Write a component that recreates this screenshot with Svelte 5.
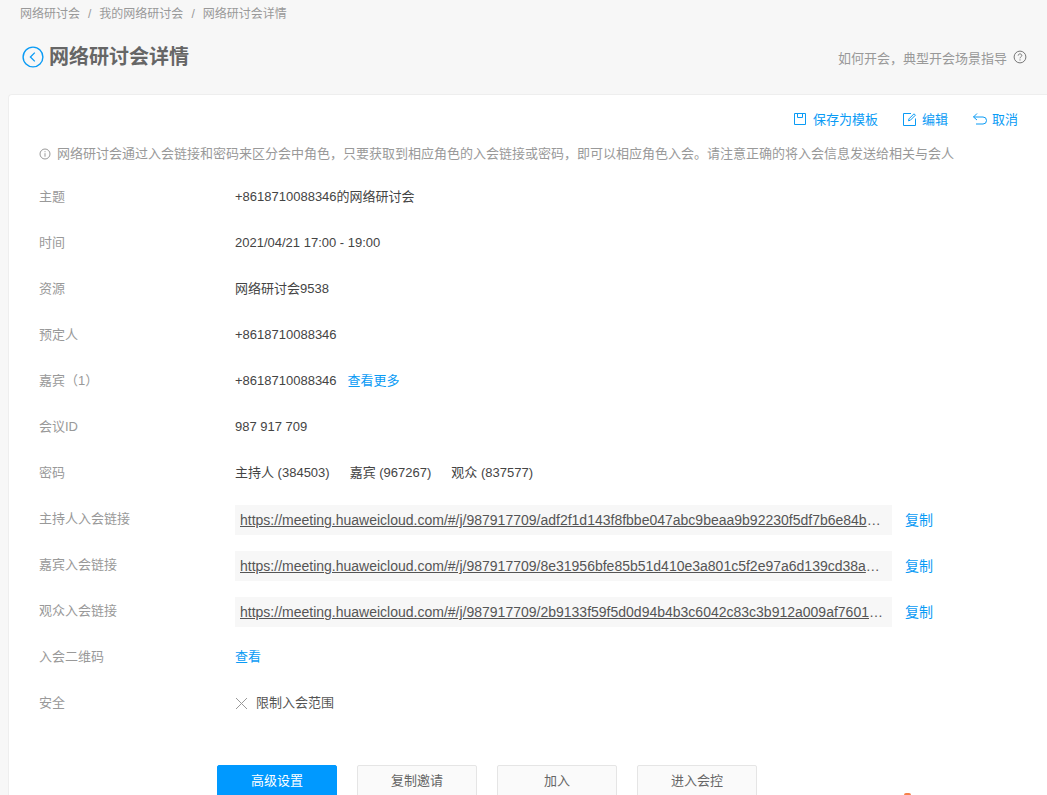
<script>
  const rows = [
    { label: '主题', value: '+8618710088346的网络研讨会' },
    { label: '时间', value: '2021/04/21 17:00 - 19:00' },
    { label: '资源', value: '网络研讨会9538' },
    { label: '预定人', value: '+8618710088346' },
    { label: '嘉宾（1）', value: '+8618710088346', more: '查看更多' },
    { label: '会议ID', value: '987 917 709' }
  ];
  const links = [
    { label: '主持人入会链接', url: 'https://meeting.huaweicloud.com/#/j/987917709/adf2f1d143f8fbbe047abc9beaa9b92230f5df7b6e84b' },
    { label: '嘉宾入会链接', url: 'https://meeting.huaweicloud.com/#/j/987917709/8e31956bfe85b51d410e3a801c5f2e97a6d139cd38a' },
    { label: '观众入会链接', url: 'https://meeting.huaweicloud.com/#/j/987917709/2b9133f59f5d0d94b4b3c6042c83c3b912a009af7601' }
  ];
</script>

<div class="page">
  <div class="crumbs">
    <span>网络研讨会</span><i>/</i><span>我的网络研讨会</span><i>/</i><span>网络研讨会详情</span>
  </div>
  <header class="head">
    <div class="title">
      <svg width="22" height="22" viewBox="0 0 22 22" fill="none" stroke="#0a9bf5"><circle cx="11" cy="11" r="9.900" stroke-width="1.400"/><path d="M12.800 6.600 8.400 11l4.400 4.400" stroke-width="1.300"/></svg>
      <h1>网络研讨会详情</h1>
    </div>
    <div class="guide">
      <span>如何开会，典型开会场景指导</span>
      <svg width="14" height="14" viewBox="0 0 14 14" fill="none" stroke="#777"><circle cx="7" cy="7" r="5.900"/><path d="M5.200 5.600C5.200 4.500 6 3.900 7 3.900s1.800.7 1.800 1.600c0 1.300-1.800 1.400-1.800 2.800"/><path d="M7 9.400v1.100"/></svg>
    </div>
  </header>

  <main class="card">
    <div class="actions">
      <span class="act">
        <svg width="14" height="14" viewBox="0 0 14 14" fill="none" stroke="#0a9bf5"><path d="M1.500 1.500h11v11h-11z"/><path d="M4.500 1.500v4h5v-4"/></svg>
        <span class="act-t">保存为模板</span>
      </span>
      <span class="act">
        <svg width="15" height="15" viewBox="0 0 15 15" fill="none" stroke="#0a9bf5"><path d="M9 1.500H1.500v12h12V6.500"/><path d="M6.500 8.800 7 6.800 12 1.800l1.400 1.400-5 5z"/></svg>
        <span class="act-t">编辑</span>
      </span>
      <span class="act">
        <svg width="16" height="14" viewBox="0 0 16 14" fill="none" stroke="#0a9bf5"><path d="M5 1.500 1.500 5 5 8"/><path d="M1.500 5h9.500a3.500 3.500 0 0 1 0 7H4"/></svg>
        <span class="act-t">取消</span>
      </span>
    </div>

    <p class="notice">
      <svg width="12" height="12" viewBox="0 0 12 12" fill="none" stroke="#999"><circle cx="6" cy="6" r="5"/><path d="M6 5.200v3.500M6 3.200v1"/></svg>
      网络研讨会通过入会链接和密码来区分会中角色，只要获取到相应角色的入会链接或密码，即可以相应角色入会。请注意正确的将入会信息发送给相关与会人
    </p>

    <div class="rows">
      {#each rows as r}
        <div class="row">
          <div class="label">{r.label}</div>
          <div class="value">{r.value}{#if r.more}<a class="more">{r.more}</a>{/if}</div>
        </div>
      {/each}

      <div class="row">
        <div class="label">密码</div>
        <div class="value pw"><span>主持人 (384503)</span><span>嘉宾 (967267)</span><span>观众 (837577)</span></div>
      </div>

      {#each links as l}
        <div class="row">
          <div class="label">{l.label}</div>
          <div class="linkbox"><span class="url">{l.url}</span>…</div>
          <a class="copy">复制</a>
        </div>
      {/each}

      <div class="row">
        <div class="label">入会二维码</div>
        <div class="value"><a class="view">查看</a></div>
      </div>

      <div class="row">
        <div class="label">安全</div>
        <div class="value sec">
          <svg width="13" height="13" viewBox="0 0 13 13" fill="none" stroke="#999"><path d="M1 1l11 11M12 1 1 12"/></svg>
          限制入会范围
        </div>
      </div>
    </div>

    <div class="buttons">
      <button class="primary">高级设置</button>
      <button>复制邀请</button>
      <button>加入</button>
      <button>进入会控</button>
    </div>
  </main>
  <span class="spark"></span>
</div>

<style>
  :global(body) {
    margin: 0;
    background: #f7f7f7;
    overflow: hidden;
  }
  .page {
    position: relative;
    width: 1047px;
    height: 795px;
    overflow: hidden;
    font-family: "Liberation Sans", "Noto Sans CJK SC", sans-serif;
    font-size: 13px;
    color: #444;
  }
  .crumbs {
    display: flex;
    align-items: center;
    gap: 7px;
    padding-left: 20px;
    height: 28px;
    color: #999;
    font-size: 12px;
    line-height: 28px;
  }
  .crumbs i { font-style: normal; padding: 0 1px; }
  .head {
    display: flex;
    justify-content: space-between;
    align-items: center;
    height: 58px;
    padding: 0 20px 0 22px;
    box-sizing: border-box;
  }
  .title { display: flex; align-items: center; gap: 5px; }
  h1 {
    margin: 0;
    font-size: 20px;
    line-height: 28px;
    font-weight: 700;
    color: #666;
  }
  .guide {
    display: flex;
    align-items: center;
    gap: 6px;
    color: #999;
  }
  .card {
    margin: 8px 0 0 8px;
    height: 720px;
    background: #fff;
    border: 1px solid #eee;
    border-right: 0;
    border-radius: 4px 0 0 0;
    box-sizing: border-box;
    padding: 13px 29px 0 30px;
  }
  .actions {
    display: flex;
    justify-content: flex-end;
    gap: 24px;
    height: 20px;
    align-items: center;
    color: #0a9bf5;
  }
  .act { display: inline-flex; align-items: center; width: max-content; }
  .act svg { margin-top: 2px; }
  .act svg + .act-t { margin-left: 5px; }
  .act:first-child .act-t { margin-left: 6px; }
  .act:last-child .act-t { margin-left: 4px; }
  .notice {
    margin: 16px 0 0;
    display: flex;
    align-items: center;
    gap: 6px;
    line-height: 20px;
    color: #999;
    white-space: nowrap;
  }
  .rows { margin-top: 10px; }
  .row {
    display: flex;
    align-items: center;
    height: 46px;
    line-height: 20px;
  }
  .label {
    width: 196px;
    flex: none;
    color: #999;
  }
  .value { color: #444; }
  .more { color: #0a9bf5; margin-left: 11px; }
  .pw { display: flex; gap: 20px; }
  .linkbox {
    width: 657px;
    height: 30px;
    flex: none;
    background: #f7f7f7;
    box-sizing: border-box;
    padding: 0 5px;
    display: flex;
    align-items: center;
    margin-top: 2px;
    font-size: 14px;
    color: #555;
    white-space: nowrap;
    overflow: hidden;
  }
  .url {
    text-decoration: underline;
    line-height: 30px;
  }
  .copy { color: #0a9bf5; margin-left: 13px; margin-top: 2px; font-size: 14px; }
  .view { color: #0a9bf5; }
  .sec { display: flex; align-items: center; gap: 8px; color: #555; }
  .buttons {
    display: flex;
    gap: 20px;
    margin: 39px 0 0 178px;
  }
  button {
    width: 120px;
    height: 36px;
    flex: none;
    background: #fafafa;
    border: 1px solid #e5e5e5;
    border-radius: 2px;
    color: #666;
    font: inherit;
    padding: 0 0 8px;
  }
  button.primary {
    background: #0099ff;
    border-color: #0099ff;
    color: #fff;
  }
  .spark {
    position: absolute;
    left: 904px;
    bottom: 0;
    width: 7px;
    height: 2px;
    background: #f6814a;
    border-radius: 3px 3px 0 0;
  }
</style>
